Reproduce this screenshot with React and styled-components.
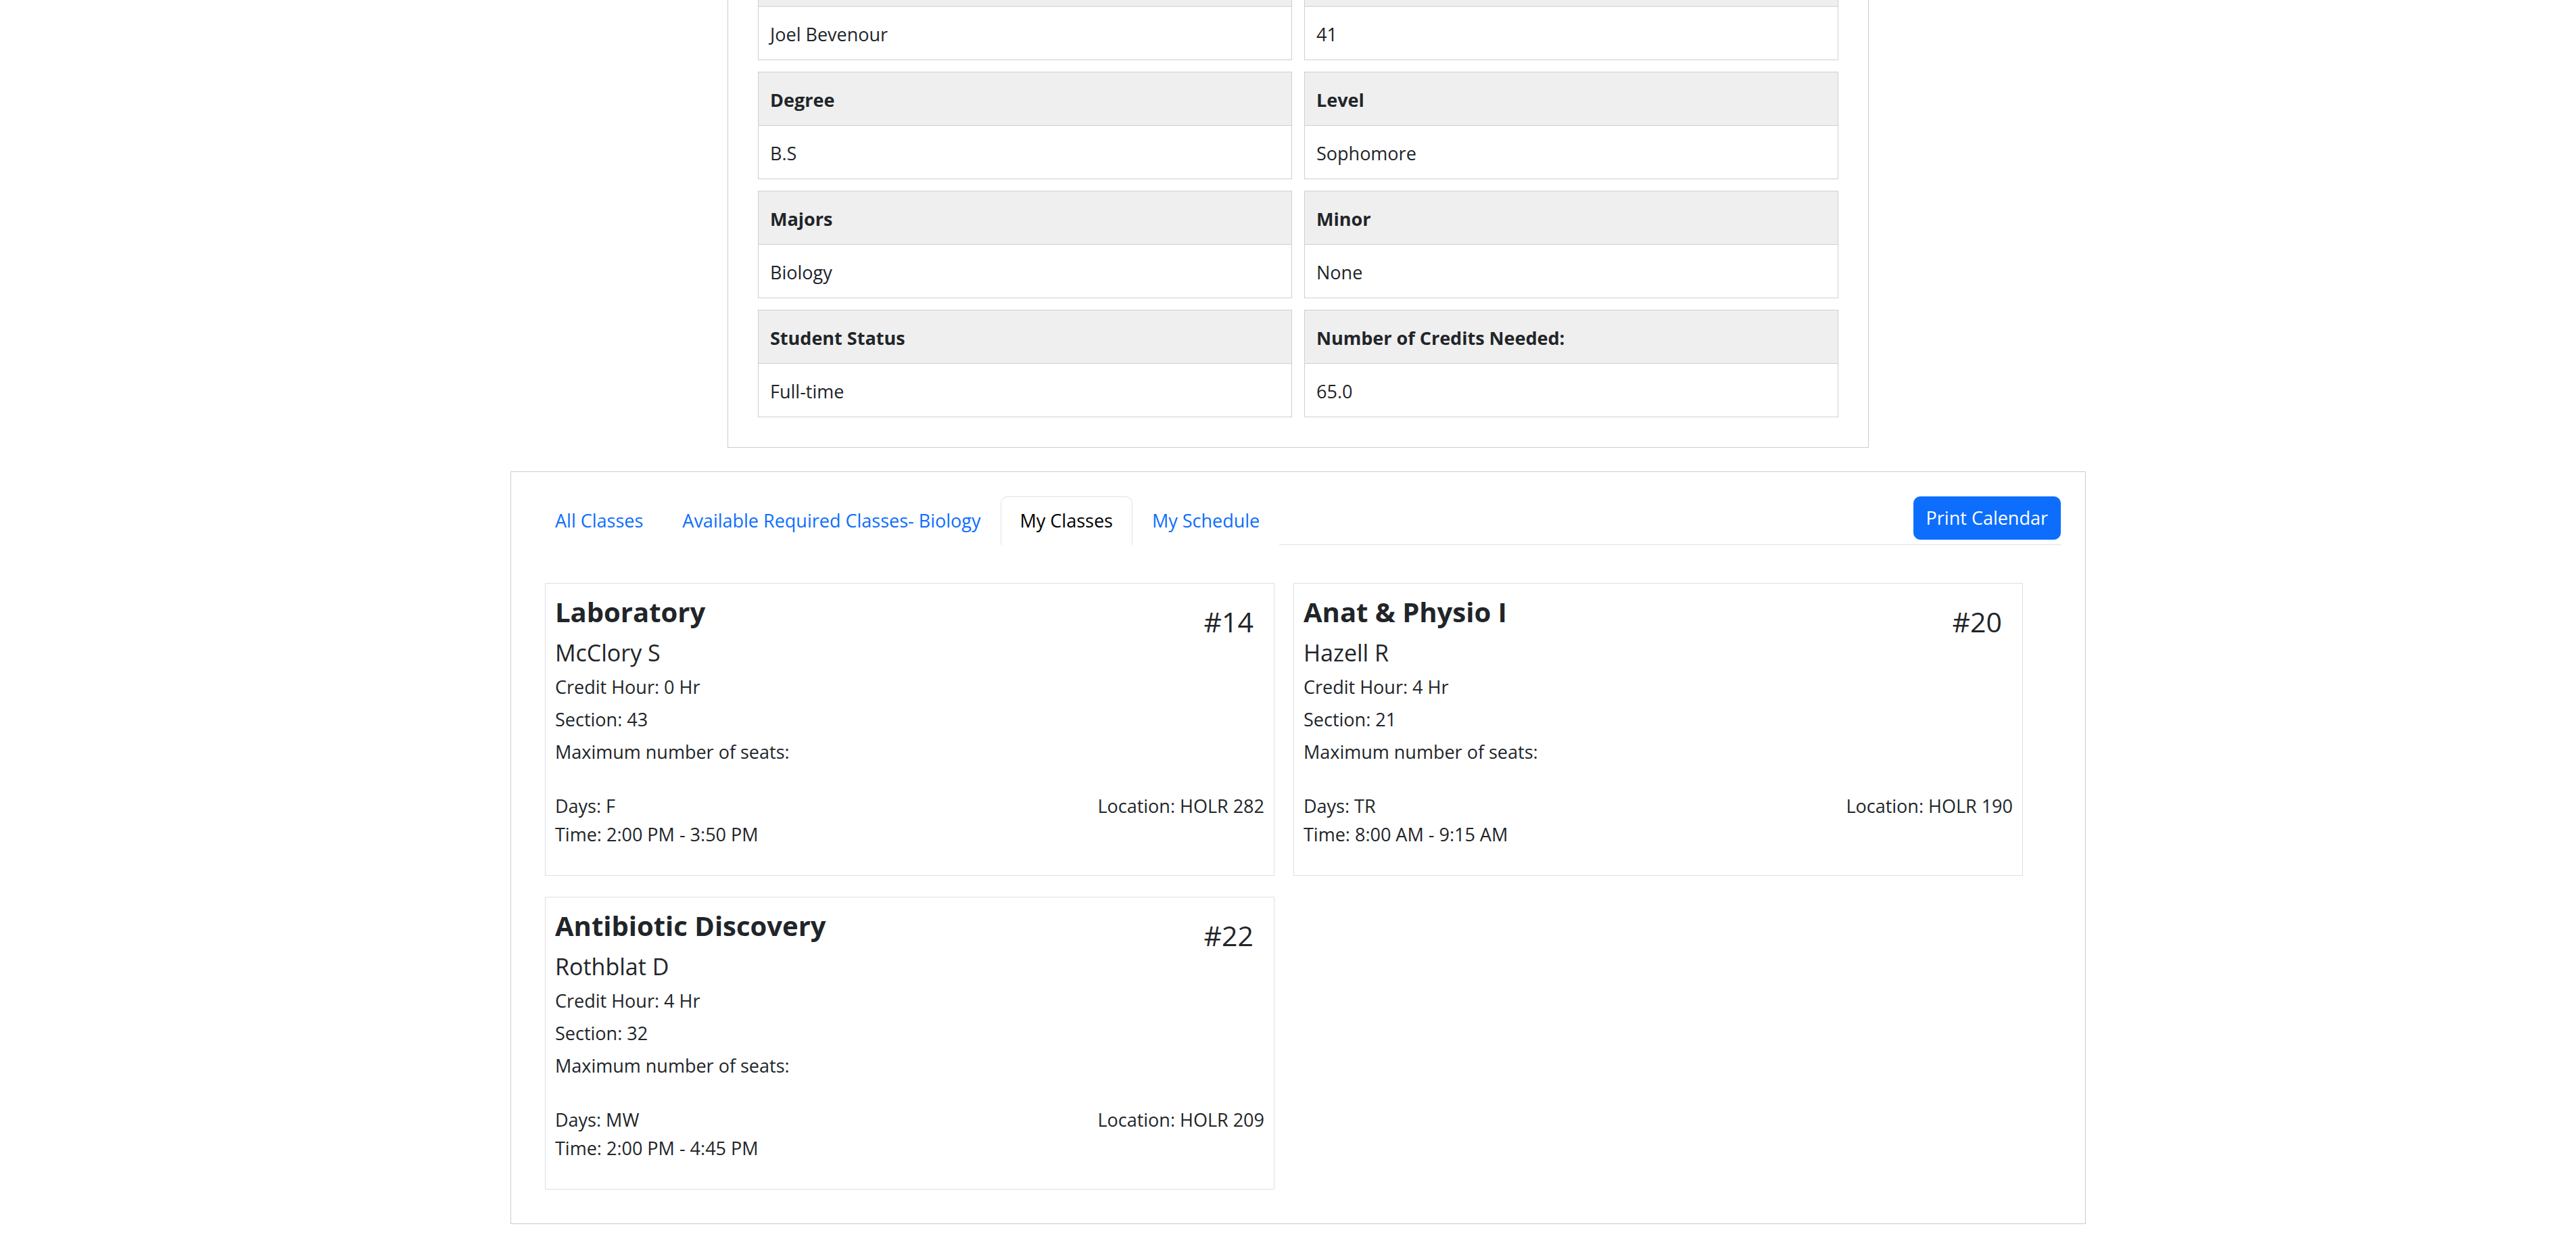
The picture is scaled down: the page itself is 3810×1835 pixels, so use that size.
import React from 'react'
import styled, { createGlobalStyle } from 'styled-components'

const GlobalStyle = createGlobalStyle`
  html, body {
    margin: 0;
    padding: 0;
    background: #fff;
  }
  body {
    font-family: "Open Sans", "Segoe UI", sans-serif;
    font-size: 27px;
    line-height: 42px;
    color: #212529;
  }
  *, *::before, *::after {
    box-sizing: border-box;
  }
`

const Page = styled.div`
  padding-bottom: 24px;
`

// page is scrolled: the first header row sits above the top edge
const InfoPanel = styled.section`
  width: 1688px;
  margin: -115px 0 0 1076px;
  padding: 44px;
  border: 1px solid #cccccc;
`

const InfoGrid = styled.div`
  display: grid;
  grid-template-columns: 790px 790px;
  column-gap: 18px;
  row-gap: 17px;
`

const InfoBox = styled.div`
  border: 1px solid #cfcfcf;
`

const InfoHead = styled.div`
  background: #efefef;
  padding: 20px 17px 16px;
  font-weight: 700;
  border-bottom: 1px solid #cfcfcf;
`

const InfoValue = styled.div`
  padding: 20px 17px 16px;
`

const ClassesPanel = styled.section`
  width: 2330px;
  margin: 35px 0 0 755px;
  padding: 36px;
  border: 1px solid #cccccc;
`

const TabBar = styled.div`
  display: flex;
  align-items: flex-start;
  border-bottom: 1px solid #dee2e6;
`

const Tab = styled.a`
  display: block;
  padding: 14px 28px;
  margin-bottom: -1px;
  border: 1px solid ${p => (p.$active ? '#dee2e6' : 'transparent')};
  border-bottom-color: ${p => (p.$active ? '#fff' : 'transparent')};
  border-radius: 10px 10px 0 0;
  background: #fff;
  color: ${p => (p.$active ? '#000' : '#0d6efd')};
  text-decoration: none;
  cursor: pointer;
`

const PrintButton = styled.button`
  margin-left: auto;
  padding: 10px 18px;
  border: 1px solid #0d6efd;
  border-radius: 10px;
  background: #0d6efd;
  color: #fff;
  font: inherit;
  line-height: 42px;
  cursor: pointer;
`

const CardGrid = styled.div`
  display: grid;
  grid-template-columns: 1079px 1079px;
  column-gap: 28px;
  row-gap: 31px;
  padding: 56px 0 14px 14px;
`

const Card = styled.div`
  border: 1px solid #dfdfdf;
  padding: 17px 14px 39px 14px;
`

const TitleRow = styled.div`
  display: flex;
  justify-content: space-between;
  align-items: flex-start;
`

const Title = styled.h4`
  margin: 0;
  font-size: 40px;
  line-height: 50px;
  font-weight: 700;
`

const Number = styled.span`
  margin: 14px 16px 0 0;
  font-size: 41px;
  line-height: 50px;
`

const Instructor = styled.h5`
  margin: 0;
  font-size: 34px;
  line-height: 42px;
  font-weight: 400;
`

const Detail = styled.p`
  margin: 0 0 6px;
  &:first-of-type {
    margin-top: 9px;
  }
`

const Schedule = styled.div`
  display: flex;
  justify-content: space-between;
  margin-top: 38px;
`

const Line = styled.div`
  white-space: nowrap;
`

// first header row is scrolled out of view
const info = [
  ['', 'Joel Bevenour'], ['', '41'],
  ['Degree', 'B.S'], ['Level', 'Sophomore'],
  ['Majors', 'Biology'], ['Minor', 'None'],
  ['Student Status', 'Full-time'], ['Number of Credits Needed:', '65.0'],
]

const tabs = ['All Classes', 'Available Required Classes- Biology', 'My Classes', 'My Schedule']

const classes = [
  { id: 14, title: 'Laboratory', instructor: 'McClory S', credit: 0, section: 43, days: 'F', time: '2:00 PM - 3:50 PM', location: 'HOLR 282' },
  { id: 20, title: 'Anat & Physio I', instructor: 'Hazell R', credit: 4, section: 21, days: 'TR', time: '8:00 AM - 9:15 AM', location: 'HOLR 190' },
  { id: 22, title: 'Antibiotic Discovery', instructor: 'Rothblat D', credit: 4, section: 32, days: 'MW', time: '2:00 PM - 4:45 PM', location: 'HOLR 209' },
]

export default function App() {
  return (
    <Page>
      <GlobalStyle />
      <InfoPanel>
        <InfoGrid>
          {info.map(([label, value], i) => (
            <InfoBox key={i}>
              <InfoHead>{label || '\u00a0'}</InfoHead>
              <InfoValue>{value}</InfoValue>
            </InfoBox>
          ))}
        </InfoGrid>
      </InfoPanel>

      <ClassesPanel>
        <TabBar>
          {tabs.map(t => (
            <Tab key={t} $active={t === 'My Classes'}>{t}</Tab>
          ))}
          <PrintButton>Print Calendar</PrintButton>
        </TabBar>
        <CardGrid>
          {classes.map(c => (
            <Card key={c.id}>
              <TitleRow>
                <Title>{c.title}</Title>
                <Number>#{c.id}</Number>
              </TitleRow>
              <Instructor>{c.instructor}</Instructor>
              <Detail>Credit Hour: {c.credit} Hr</Detail>
              <Detail>Section: {c.section}</Detail>
              <Detail>Maximum number of seats:</Detail>
              <Schedule>
                <div>
                  <Line>Days: {c.days}</Line>
                  <Line>Time: {c.time}</Line>
                </div>
                <Line>Location: {c.location}</Line>
              </Schedule>
            </Card>
          ))}
        </CardGrid>
      </ClassesPanel>
    </Page>
  )
}
